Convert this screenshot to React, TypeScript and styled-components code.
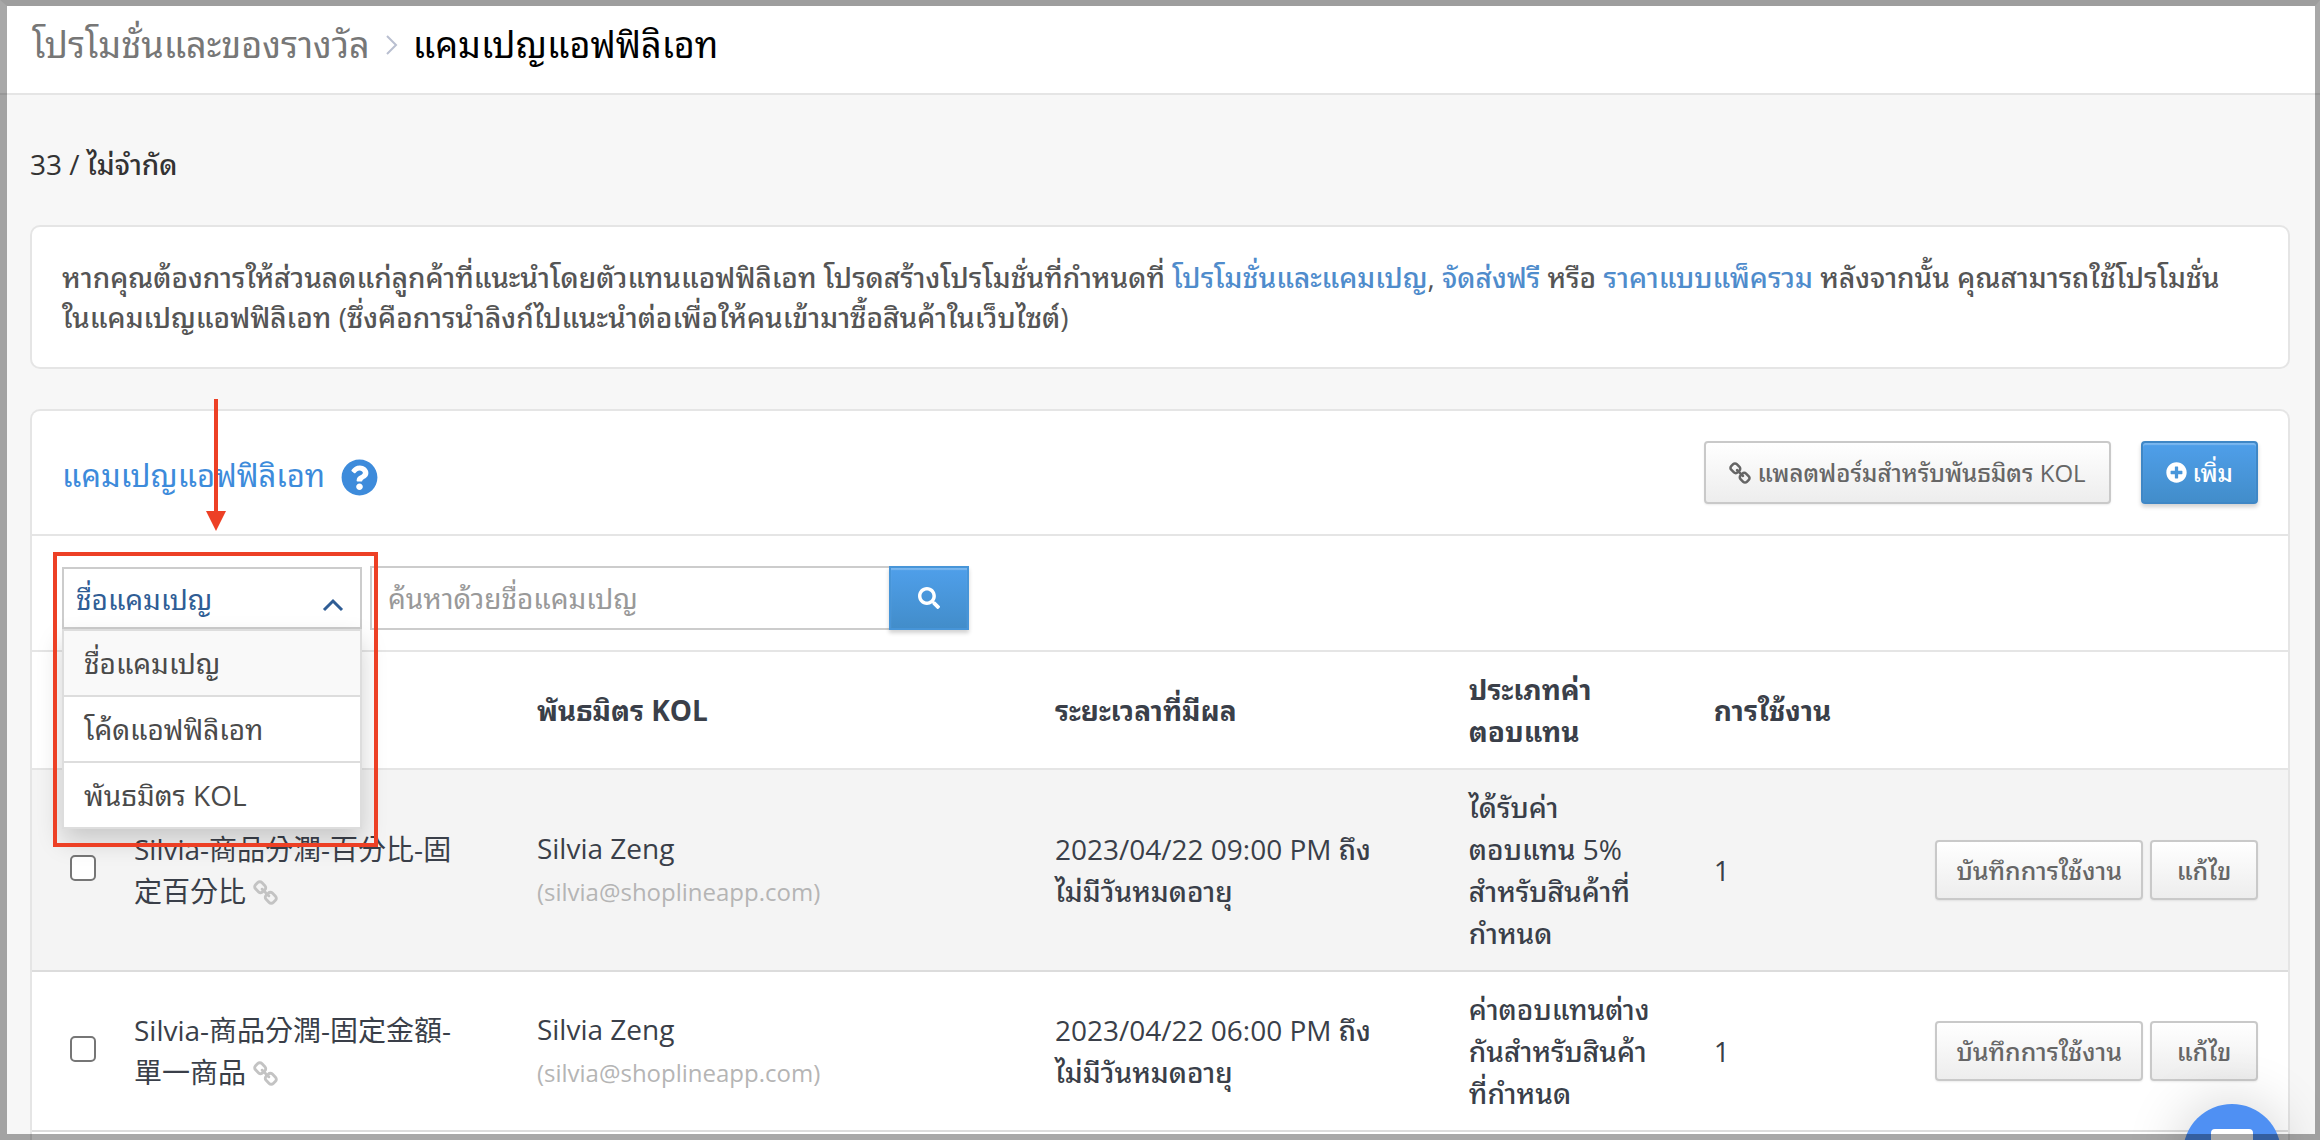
import React from "react";
import styled, { createGlobalStyle, css } from "styled-components";
import { FaPlusCircle, FaQuestionCircle, FaSearch } from "react-icons/fa";

const line = "#e5e5e5";
const blue = "#3d8bdb";
const red = "#ed4025";

const GlobalStyle = createGlobalStyle`
  *, *::before, *::after { box-sizing: border-box; }
  body {
    margin: 0;
    background: #f7f7f7;
    color: #333;
    font-family: "Open Sans", "Noto Sans Thai Looped", "Noto Sans Thai", "Noto Sans CJK TC", sans-serif;
    font-size: 28px;
    font-weight: 500;
    line-height: 42px;
  }
  button, input, select { font: inherit; color: inherit; margin: 0; }
`;

const Page = styled.div`
  min-height: 100vh;
  display: flex;
  flex-direction: column;
`;

const Frame = styled.div`
  position: fixed;
  inset: 0;
  z-index: 20;
  border: solid rgba(0, 0, 0, 0.34);
  border-top-color: rgba(0, 0, 0, 0.38);
  border-width: 6px 5px 6px 7px;
  pointer-events: none;
`;

const TopBar = styled.header`
  height: 95px;
  padding: 0 32px 4px;
  display: flex;
  align-items: center;
  background: #fff;
  border-bottom: 2px solid ${line};
`;

const Crumbs = styled.nav`
  display: flex;
  align-items: center;
  gap: 15px;
  font-size: 36px;
  font-weight: 400;
  line-height: 48px;
`;

const CrumbLink = styled.a`
  color: #777;
  text-decoration: none;
`;

const CrumbHere = styled.h1`
  margin: 0;
  font: inherit;
  color: #000;
`;

const Main = styled.main`
  flex: 1;
  display: flex;
  flex-direction: column;
  padding: 48px 30px 0;
`;

const Quota = styled.p`
  margin: 0 0 40px;
`;

const card = css`
  background: #fff;
  border: 2px solid ${line};
  border-radius: 10px;
`;

const Notice = styled.section`
  ${card}
  margin-bottom: 40px;
  padding: 30px;
  color: #555;
  line-height: 40px;
  p { margin: 0; }
  a { color: #4f8ccc; text-decoration: none; }
`;

const Panel = styled.section`
  ${card}
  flex: 1;
  border-bottom: 0;
  border-radius: 10px 10px 0 0;
`;

const PanelHead = styled.div`
  display: flex;
  align-items: center;
  justify-content: space-between;
  padding: 30px;
  border-bottom: 2px solid ${line};
`;

const TitleGroup = styled.div`
  display: flex;
  align-items: flex-end;
  gap: 16px;
  padding-top: 4px;
`;

const PanelTitle = styled.h2`
  margin: 0;
  font-size: 31px;
  font-weight: 400;
  color: ${blue};
`;

const HelpButton = styled.button`
  display: flex;
  padding: 0;
  border: 0;
  background: none;
  color: ${blue};
  font-size: 37px;
`;

const Actions = styled.div`
  display: flex;
  gap: 30px;
`;

const Button = styled.button<{ $primary?: boolean; $size?: "small" }>`
  display: flex;
  align-items: center;
  justify-content: center;
  gap: 6px;
  height: ${(p) => (p.$size ? 60 : 63)}px;
  padding: 0 ${(p) => (p.$size ? 19 : 23)}px;
  border: 2px solid ${(p) => (p.$primary ? "#3f87c6" : "#c9c9c9")};
  border-radius: 4px;
  font-size: ${(p) => (p.$size ? 25 : 24)}px;
  line-height: 36px;
  white-space: nowrap;
  color: ${(p) => (p.$primary ? "#fff" : "#666")};
  background: ${(p) =>
    p.$primary
      ? "linear-gradient(#4f9fea, #428dca)"
      : "linear-gradient(#fff, #ededed)"};
  box-shadow: ${(p) =>
    p.$primary
      ? "inset 0 2px 1px rgba(255,255,255,.25), 0 3px 4px rgba(0,0,0,.18)"
      : "0 1px 2px rgba(0,0,0,.08)"};
`;

const Filters = styled.form`
  display: flex;
  align-items: center;
  gap: 8px;
  padding: 30px 30px 20px;
  border-bottom: 2px solid ${line};
  font-weight: 400;
`;

const Picker = styled.div`
  position: relative;
  width: 300px;
`;

const PickerSelect = styled.select`
  appearance: none;
  display: block;
  width: 100%;
  height: 62px;
  padding: 2px 48px 0 12px;
  border: 2px solid #ccc;
  border-radius: 0;
  background: #fff;
  color: #2f5d95;
`;

const PickerArrow = styled.svg`
  position: absolute;
  right: 18px;
  top: 31px;
  pointer-events: none;
`;

const Menu = styled.ul`
  position: absolute;
  z-index: 5;
  left: 0;
  right: 0;
  top: 100%;
  margin: 0;
  padding: 0;
  list-style: none;
  border: 2px solid #ddd;
  background: #fff;
  color: #4a4a4a;
  box-shadow: 0 12px 24px rgba(0, 0, 0, 0.18);
`;

const MenuItem = styled.li<{ $active?: boolean }>`
  padding: 11px 20px;
  background: ${(p) => (p.$active ? "#f9f9f9" : "#fff")};
  & + & { border-top: 2px solid #ddd; }
`;

const SearchGroup = styled.div`
  display: flex;
  width: 599px;
`;

const SearchInput = styled.input`
  flex: 1;
  min-width: 0;
  height: 64px;
  padding: 0 16px;
  border: 2px solid #ccc;
  border-right: 0;
  border-radius: 0;
  background: #fff;
  &::placeholder { color: #999; opacity: 1; }
`;

const SearchButton = styled(Button)`
  width: 80px;
  height: 64px;
  padding: 0;
  border-color: #4795d8;
  border-radius: 0;
`;

const Table = styled.table`
  width: 100%;
  table-layout: fixed;
  border-collapse: separate;
  border-spacing: 0;
  color: #3a3f49;
  th, td {
    padding: 16px 30px;
    text-align: left;
    vertical-align: middle;
    border-bottom: 2px solid #dcdcdc;
  }
  th { border-bottom-color: ${line}; font-weight: 700; }
  th:first-child, td:first-child { padding: 0 0 4px 38px; }
  tbody tr:nth-child(odd) { background: #f4f4f4; }
`;

const Col = styled.col<{ $w?: string }>`
  width: ${(p) => p.$w ?? "auto"};
`;

const NameCell = styled.td`
  font-weight: 400;
`;

const Check = styled.input`
  appearance: none;
  display: block;
  width: 26px;
  height: 26px;
  border: 2px solid #767676;
  border-radius: 5px;
  background: #fff;
`;

const ChainLink = styled.a`
  color: #c3c3c3;
  svg { vertical-align: -3px; }
`;

const Email = styled.span`
  font-size: 24px;
  color: #b5b5b5;
`;

const RowActions = styled.div`
  display: flex;
  justify-content: flex-end;
  gap: 7px;
`;

const EditButton = styled(Button)`
  width: 108px;
`;

const Chat = styled.button`
  position: fixed;
  z-index: 10;
  right: 39px;
  bottom: -62px;
  width: 98px;
  height: 98px;
  padding: 24px 28px;
  border: 0;
  border-radius: 50%;
  background: #4f90f3;
  box-shadow: 0 2px 60px rgba(0, 0, 0, 0.2);
`;

const ChatIcon = styled.svg`
  display: block;
`;

const RedBox = styled.div`
  position: absolute;
  z-index: 6;
  left: -9px;
  top: -15px;
  width: 325px;
  height: 295px;
  border: 4px solid ${red};
  pointer-events: none;
`;

const RedArrow = styled.svg`
  position: absolute;
  z-index: 6;
  left: 144px;
  top: -168px;
  pointer-events: none;
`;

/* Two-ring chain, running from top left to bottom right. */
const ChainIcon = ({ size }: { size: number }) => (
  <svg width={size} height={size} viewBox="0 0 1664 1664" fill="currentColor" aria-hidden="true">
    <path d="M1456 1216q0-40-28-68l-208-208q-28-28-68-28-42 0-72 32 3 3 19 18.500t21.500 21.500 15 19 13 25.500 3.500 27.500q0 40-28 68t-68 28q-15 0-27.500-3.500t-25.500-13-19-15-21.500-21.500-18.500-19q-33 31-33 73 0 40 28 68l206 207q27 27 68 27 40 0 68-26l147-146q28-28 28-67zM753 511q0-40-28-68L519 236q-28-28-68-28-39 0-68 27L236 381q-28 28-28 67 0 40 28 68l208 208q27 27 68 27 42 0 72-31-3-3-19-18.500t-21.500-21.500-15-19-13-25.500-3.500-27.500q0-40 28-68t68-28q15 0 27.500 3.500t25.500 13 19 15 21.500 21.500 18.500 19q33-31 33-73zm895 705q0 120-85 203l-147 146q-83 83-203 83-121 0-204-85l-206-207q-83-83-83-203 0-123 88-209l-88-88q-86 88-208 88-120 0-204-84L100 652q-84-84-84-204t85-203L248 99q83-83 203-83 121 0 204 85l206 207q83 83 83 203 0 123-88 209l88 88q86-88 208-88 120 0 204 84l208 208q84 84 84 204z" />
  </svg>
);

const searchFields = ["ชื่อแคมเปญ", "โค้ดแอฟฟิลิเอท", "พันธมิตร KOL"];

const campaigns = [
  {
    name: "Silvia-商品分潤-百分比-固定百分比",
    kol: "Silvia Zeng",
    email: "(silvia@shoplineapp.com)",
    period: ["2023/04/22 09:00 PM ถึง", "ไม่มีวันหมดอายุ"],
    reward: ["ได้รับค่า", "ตอบแทน 5%", "สำหรับสินค้าที่", "กำหนด"],
    used: 1,
  },
  {
    name: "Silvia-商品分潤-固定金額-單一商品",
    kol: "Silvia Zeng",
    email: "(silvia@shoplineapp.com)",
    period: ["2023/04/22 06:00 PM ถึง", "ไม่มีวันหมดอายุ"],
    reward: ["ค่าตอบแทนต่าง", "กันสำหรับสินค้า", "ที่กำหนด"],
    used: 1,
  },
];

const Lines = ({ text }: { text: string[] }) => (
  <>
    {text.map((t, i) => (
      <React.Fragment key={t}>
        {i > 0 && <br />}
        {t}
      </React.Fragment>
    ))}
  </>
);

export default function App() {
  return (
    <Page>
      <GlobalStyle />
      <TopBar>
        <Crumbs>
          <CrumbLink href="#promotions">โปรโมชั่นและของรางวัล</CrumbLink>
          <svg width="13" height="20" viewBox="0 0 13 20" fill="none" stroke="#b9bfd0" strokeWidth="2" aria-hidden="true">
            <path d="M2 1l9 9-9 9" />
          </svg>
          <CrumbHere>แคมเปญแอฟฟิลิเอท</CrumbHere>
        </Crumbs>
      </TopBar>

      <Main>
        <Quota>33 / ไม่จำกัด</Quota>

        <Notice>
          <p>
            หากคุณต้องการให้ส่วนลดแก่ลูกค้าที่แนะนำโดยตัวแทนแอฟฟิลิเอท โปรดสร้างโปรโมชั่นที่กำหนดที่{" "}
            <a href="#campaigns">โปรโมชั่นและแคมเปญ</a>, <a href="#free-shipping">จัดส่งฟรี</a> หรือ{" "}
            <a href="#bundles">ราคาแบบแพ็ครวม</a> หลังจากนั้น คุณสามารถใช้โปรโมชั่น
            <br />
            ในแคมเปญแอฟฟิลิเอท (ซึ่งคือการนำลิงก์ไปแนะนำต่อเพื่อให้คนเข้ามาซื้อสินค้าในเว็บไซต์)
          </p>
        </Notice>

        <Panel>
          <PanelHead>
            <TitleGroup>
              <PanelTitle>แคมเปญแอฟฟิลิเอท</PanelTitle>
              <HelpButton type="button" aria-label="?">
                <FaQuestionCircle />
              </HelpButton>
            </TitleGroup>
            <Actions>
              <Button type="button">
                <ChainIcon size={22} />
                แพลตฟอร์มสำหรับพันธมิตร KOL
              </Button>
              <Button type="button" $primary>
                <FaPlusCircle size={21} />
                เพิ่ม
              </Button>
            </Actions>
          </PanelHead>

          <Filters>
            <Picker>
              <PickerSelect aria-label="ชื่อแคมเปญ" defaultValue={searchFields[0]}>
                {searchFields.map((f) => (
                  <option key={f}>{f}</option>
                ))}
              </PickerSelect>
              <PickerArrow width="22" height="14" viewBox="0 0 22 14" fill="none" stroke="#2f5d95" strokeWidth="3" aria-hidden="true">
                <path d="M2 12l9-9 9 9" />
              </PickerArrow>
              <Menu role="listbox">
                {searchFields.map((f, i) => (
                  <MenuItem key={f} role="option" aria-selected={i === 0} $active={i === 0}>
                    {f}
                  </MenuItem>
                ))}
              </Menu>
              <RedBox />
              <RedArrow width="20" height="132" viewBox="0 0 20 132" fill={red} aria-hidden="true">
                <path d="M8 0h4v112h8L10 132 0 112h8z" />
              </RedArrow>
            </Picker>
            <SearchGroup>
              <SearchInput type="text" aria-label="ค้นหาด้วยชื่อแคมเปญ" placeholder="ค้นหาด้วยชื่อแคมเปญ" />
              <SearchButton type="button" $primary aria-label="ค้นหา">
                <FaSearch size={22} />
              </SearchButton>
            </SearchGroup>
          </Filters>

          <Table>
            <colgroup>
              <Col $w="72px" />
              <Col $w="17.86%" />
              <Col $w="22.96%" />
              <Col $w="18.35%" />
              <Col $w="10.86%" />
              <Col />
              <Col $w="383px" />
            </colgroup>
            <thead>
              <tr>
                <th />
                <th />
                <th>พันธมิตร KOL</th>
                <th>ระยะเวลาที่มีผล</th>
                <th>
                  <Lines text={["ประเภทค่า", "ตอบแทน"]} />
                </th>
                <th>การใช้งาน</th>
                <th />
              </tr>
            </thead>
            <tbody>
              {campaigns.map((c) => (
                <tr key={c.name}>
                  <td>
                    <Check type="checkbox" aria-label={c.name} />
                  </td>
                  <NameCell>
                    {c.name}{" "}
                    <ChainLink href="#link" aria-label={c.name}>
                      <ChainIcon size={25} />
                    </ChainLink>
                  </NameCell>
                  <td>
                    {c.kol}
                    <br />
                    <Email>{c.email}</Email>
                  </td>
                  <td>
                    <Lines text={c.period} />
                  </td>
                  <td>
                    <Lines text={c.reward} />
                  </td>
                  <td>{c.used}</td>
                  <td>
                    <RowActions>
                      <Button type="button" $size="small">
                        บันทึกการใช้งาน
                      </Button>
                      <EditButton type="button" $size="small">
                        แก้ไข
                      </EditButton>
                    </RowActions>
                  </td>
                </tr>
              ))}
            </tbody>
          </Table>
        </Panel>
      </Main>

      <Chat type="button" aria-label="แชท">
        <ChatIcon width="42" height="48" viewBox="0 0 42 48" fill="#fff" aria-hidden="true">
          <path d="M4 0h34a4 4 0 0 1 4 4v42l-9-6H4a4 4 0 0 1-4-4V4a4 4 0 0 1 4-4z" />
        </ChatIcon>
      </Chat>
      <Frame />
    </Page>
  );
}
